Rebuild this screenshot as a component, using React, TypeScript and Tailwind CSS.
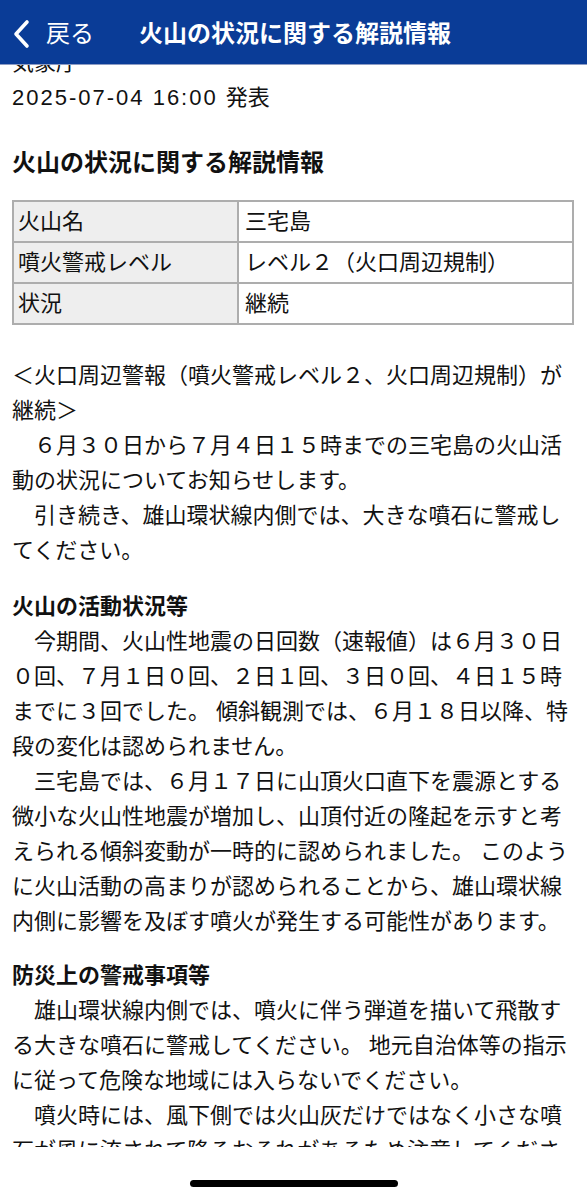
import React from 'react';

const rows = [
  ['火山名', '三宅島'],
  ['噴火警戒レベル', 'レベル２（火口周辺規制）'],
  ['状況', '継続'],
];

const activity = [
  '　今期間、火山性地震の日回数（速報値）は６月３０日０回、７月１日０回、２日１回、３日０回、４日１５時までに３回でした。 傾斜観測では、６月１８日以降、特段の変化は認められません。',
  '　三宅島では、６月１７日に山頂火口直下を震源とする微小な火山性地震が増加し、山頂付近の隆起を示すと考えられる傾斜変動が一時的に認められました。 このように火山活動の高まりが認められることから、雄山環状線内側に影響を及ぼす噴火が発生する可能性があります。',
];

const caution = [
  '　雄山環状線内側では、噴火に伴う弾道を描いて飛散する大きな噴石に警戒してください。 地元自治体等の指示に従って危険な地域には入らないでください。',
  '　噴火時には、風下側では火山灰だけではなく小さな噴石が風に流されて降るおそれがあるため注意してください。',
];

function BackChevron() {
  return (
    <svg width="20" height="30" viewBox="0 0 20 30" fill="none">
      <polyline
        points="15,3 4,15 15,27"
        stroke="white"
        strokeWidth="3.6"
        strokeLinecap="round"
        strokeLinejoin="round"
      />
    </svg>
  );
}

export default function App() {
  return (
    <div className="relative h-[1200px] w-full overflow-hidden bg-white font-['Liberation_Sans','Noto_Sans_CJK_JP',sans-serif] text-[#111] [text-spacing-trim:space-all]">
      {/* Header */}
      <header className="flex h-[65px] items-center border-b border-[#8d9cc4] bg-[#0a3c97] pl-[12px] pt-[3px] text-white">
        <div className="flex items-center gap-[14px]">
          <BackChevron />
          <span className="text-[24px] leading-none">戻る</span>
        </div>
        <h1 className="ml-[45px] text-[24px] font-bold leading-none">火山の状況に関する解説情報</h1>
      </header>

      {/* Scrolled content */}
      <div className="h-[1082px] overflow-hidden">
        <div className="-mt-[20px] px-[12px] text-[22px] leading-[35px]">
          <p>気象庁</p>
          <p className="tracking-[2px]">
            2025-07-04 16:00 <span className="tracking-normal">発表</span>
          </p>

          <h2 className="mt-[30px] text-[24px] font-bold leading-[35px]">火山の状況に関する解説情報</h2>

          <table className="mt-[20px] w-[562px] border-collapse border-2 border-[#adadad]">
            <tbody>
              {rows.map(([k, v]) => (
                <tr key={k} className="h-[41px]">
                  <td className="w-[225px] border-2 border-[#adadad] bg-[#eeeeee] px-[4px] py-0 align-middle">{k}</td>
                  <td className="border-2 border-[#adadad] px-[6px] py-0 align-middle">{v}</td>
                </tr>
              ))}
            </tbody>
          </table>

          <div className="mt-[33px]">
            <p>＜火口周辺警報（噴火警戒レベル２、火口周辺規制）が継続＞</p>
            <p>　６月３０日から７月４日１５時までの三宅島の火山活動の状況についてお知らせします。</p>
            <p>　引き続き、雄山環状線内側では、大きな噴石に警戒してください。</p>
          </div>

          <h3 className="mt-[21px] font-bold">火山の活動状況等</h3>
          {activity.map((t) => (
            <p key={t}>{t}</p>
          ))}

          <h3 className="mt-[19px] font-bold">防災上の警戒事項等</h3>
          {caution.map((t) => (
            <p key={t}>{t}</p>
          ))}
        </div>
      </div>

      {/* Home indicator */}
      <div className="flex h-[53px] justify-center pt-[33px]">
        <div className="h-[7px] w-[208px] rounded-full bg-black" />
      </div>
    </div>
  );
}
